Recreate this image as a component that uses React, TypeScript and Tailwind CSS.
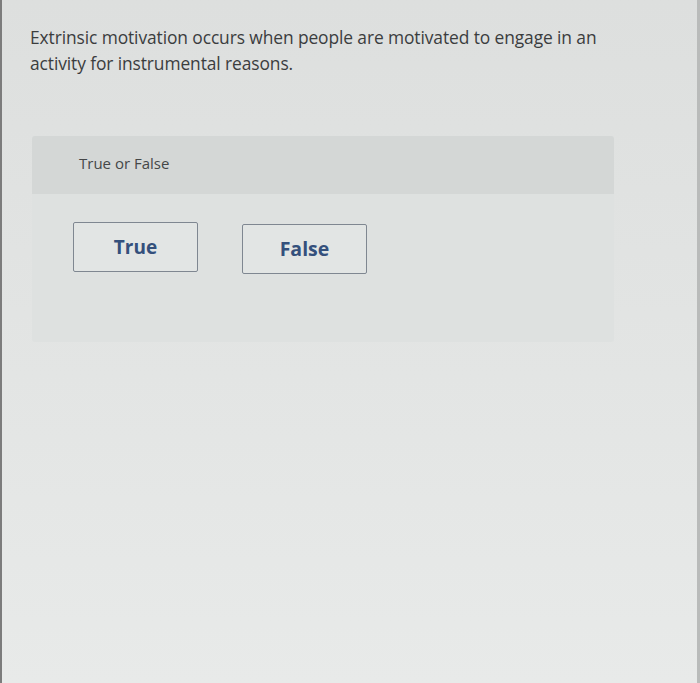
import React from "react";

export default function App() {
  return (
    <div
      className="w-[700px] h-[683px] bg-gradient-to-b from-[#dddfde] to-[#e8eae9] border-l-2 border-l-[#7c7c7c] border-r-[3px] border-r-[#b9bbba] overflow-hidden"
      style={{ fontFamily: '"Open Sans", "Liberation Sans", sans-serif' }}
    >
      {/* Question */}
      <div className="pl-[28px] pt-[24px] w-[640px] text-[17.4px] leading-[26px] text-[#3b3d3e] tracking-[-0.1px]">
        Extrinsic motivation occurs when people are motivated to engage in an
        activity for instrumental reasons.
      </div>

      {/* Answer panel */}
      <div className="ml-[30px] mt-[60px] w-[582px] h-[206px] rounded-[3px] bg-[#dee1e0] flex flex-col">
        <div className="h-[58px] bg-[#d4d7d6] rounded-t-[3px] pl-[47px] pt-[16px] text-[15px] text-[#454748]">
          True or False
        </div>
        <div className="flex gap-[44px] pl-[41px] pt-[28px]">
          <button className="w-[125px] h-[50px] border-[1.5px] border-[#7f8791] rounded-[2px] bg-[#e2e5e4] text-[19px] font-bold text-[#34507c]">
            True
          </button>
          <button className="w-[125px] h-[50px] mt-[2px] border-[1.5px] border-[#7f8791] rounded-[2px] bg-[#e2e5e4] text-[19.5px] font-bold text-[#34507c]">
            False
          </button>
        </div>
      </div>
    </div>
  );
}
